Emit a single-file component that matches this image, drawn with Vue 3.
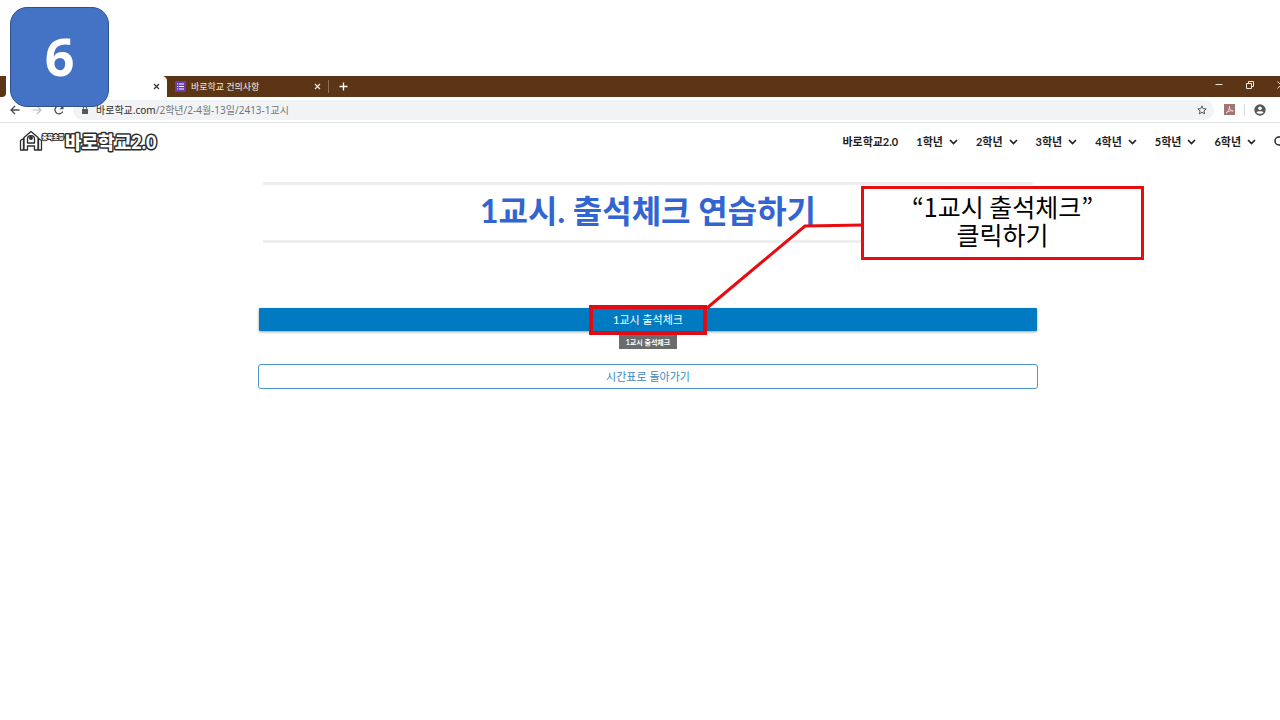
<script setup>
const grades = ['1학년', '2학년', '3학년', '4학년', '5학년', '6학년']
</script>

<template>
  <div class="slide">
    <div class="step">6</div>

    <div class="tabs">
      <div class="tab-prev"></div>
      <div class="tab active">
        <button class="icon-btn" aria-label="탭 닫기">
          <svg width="7" height="7" viewBox="0 0 7 7"><path d="M1 1l5 5M6 1l-5 5" stroke="#333" stroke-width="1.2" /></svg>
        </button>
      </div>
      <div class="tab">
        <svg width="11" height="11" viewBox="0 0 11 11">
          <rect width="11" height="11" rx="1" fill="#6a3ab2" />
          <path d="M2 3h1.2M2 5.500h1.200M2 8h1.200M4 3h5M4 5.500h5M4 8h5" stroke="#fff" stroke-width="1.2" />
        </svg>
        <span class="tab-title">바로학교 건의사항</span>
        <button class="icon-btn" aria-label="탭 닫기">
          <svg width="7" height="7" viewBox="0 0 7 7"><path d="M1 1l5 5M6 1l-5 5" stroke="#f3e6da" stroke-width="1.2" /></svg>
        </button>
      </div>
      <button class="icon-btn new-tab" aria-label="새 탭">
        <svg width="9" height="9" viewBox="0 0 9 9"><path d="M4.500 0.500v8M0.500 4.500h8" stroke="#fff" stroke-width="1.3" /></svg>
      </button>
      <div class="window-controls">
        <button class="icon-btn" aria-label="최소화">
          <svg width="8" height="8" viewBox="0 0 8 8"><path d="M0.500 3.500h7" stroke="#f3e6da" /></svg>
        </button>
        <button class="icon-btn" aria-label="이전 크기로 복원">
          <svg width="8" height="8" viewBox="0 0 8 8" fill="none" stroke="#f3e6da"><path d="M0.500 2.500h5v5h-5zM2.500 2.500v-2h5v5h-2" /></svg>
        </button>
        <button class="icon-btn" aria-label="닫기">
          <svg width="8" height="8" viewBox="0 0 8 8"><path d="M0.500 0.500l7 7M7.500 0.500l-7 7" stroke="#f3e6da" /></svg>
        </button>
      </div>
    </div>

    <div class="toolbar">
      <button class="icon-btn" aria-label="뒤로">
        <svg width="10" height="10" viewBox="0 0 10 10" fill="none" stroke="#4a4d51" stroke-width="1.300"><path d="M9.500 5H1M5 1L1 5l4 4" /></svg>
      </button>
      <button class="icon-btn" aria-label="앞으로">
        <svg width="10" height="10" viewBox="0 0 10 10" fill="none" stroke="#b9bbbe" stroke-width="1.200"><path d="M0.500 5H9M5 1l4 4-4 4" /></svg>
      </button>
      <button class="icon-btn" aria-label="새로고침">
        <svg width="10" height="10" viewBox="0 0 10 10" fill="none" stroke="#4a4d51" stroke-width="1.300"><path d="M8.600 6.500A4 4 0 1 1 8 2.300" /><path d="M9.500 0.300v4h-4z" fill="#4a4d51" stroke="none" /></svg>
      </button>
      <div class="address">
        <svg width="6" height="8" viewBox="0 0 6 8"><rect y="3" width="6" height="5" rx="0.600" fill="#54575b" /><path d="M1.300 3.500V2.200a1.700 1.700 0 0 1 3.400 0v1.300" fill="none" stroke="#54575b" /></svg>
        <span class="url"><span class="host">바로학교.com</span>/2학년/2-4월-13일/2413-1교시</span>
        <button class="icon-btn" aria-label="북마크">
          <svg width="10" height="10" viewBox="0 0 10 10" fill="none" stroke="#55585c"><path d="M5 0.900l1.200 2.800 3 .2-2.300 2 .8 3L5 7.300 2.300 8.900l.8-3-2.300-2 3-.2z" /></svg>
        </button>
      </div>
      <button class="icon-btn" aria-label="PDF">
        <svg width="11" height="11" viewBox="0 0 11 11"><rect width="11" height="11" fill="#a27575" /><path d="M2 9c2-1 3.500-4 3.500-6.800C5 5 7 7 9.200 7 6.500 6.200 4 7.200 2 9z" fill="none" stroke="#f3dddd" stroke-width="0.900" /></svg>
      </button>
      <span class="divider"></span>
      <button class="icon-btn" aria-label="프로필">
        <svg width="12" height="12" viewBox="0 0 12 12"><circle cx="6" cy="6" r="5.700" fill="#55585c" /><circle cx="6" cy="4.200" r="1.800" fill="#fff" /><path d="M2.500 8.300C3.300 6.900 8.700 6.900 9.500 8.300 8.200 10.300 3.800 10.300 2.500 8.300z" fill="#fff" /></svg>
      </button>
    </div>

    <header class="site-header">
      <a href="#" class="logo" aria-label="바로학교2.0">
        <svg width="142" height="24" viewBox="0 0 142 24">
          <g fill="#fff" stroke="#2c2c2c" stroke-width="1.300" stroke-linejoin="round">
            <path d="M1.500 10.500l3-2v11.500h-3zM22.500 10.500l-3-2v11.500h3z" />
            <path d="M5 7.500L12 1.500l7 6V20h-3.500v-4h-7v4H5z" />
            <path d="M8.500 13V9c0-4.500 7-4.500 7 0v4z" />
            <circle cx="12" cy="8" r="1.300" fill="#2c2c2c" />
          </g>
          <text x="23" y="9" class="logo-small">충북초등</text>
          <text x="46" y="19" class="logo-main">바로학교2.0</text>
        </svg>
      </a>
      <nav>
        <a href="#" class="home">바로학교2.0</a>
        <a v-for="g in grades" :key="g" href="#">
          {{ g }}
          <svg width="9" height="6" viewBox="0 0 9 6"><path d="M1 1l3.500 3.500L8 1" fill="none" stroke="#222" stroke-width="1.700" /></svg>
        </a>
        <button class="icon-btn search" aria-label="검색">
          <svg width="12" height="12" viewBox="0 0 12 12" fill="none" stroke="#222" stroke-width="1.500"><circle cx="5" cy="5" r="4" /><path d="M8 8l3.500 3.500" /></svg>
        </button>
      </nav>
    </header>

    <main>
      <h1>1교시. 출석체크 연습하기</h1>
      <div class="check">
        <a href="#" class="primary">1교시 출석체크</a>
        <span class="highlight"></span>
        <span class="tooltip">1교시 출석체크</span>
      </div>
      <a href="#" class="secondary">시간표로 돌아가기</a>

      <svg class="connector" width="160" height="90" viewBox="0 0 160 90"><path d="M3 85L101 3l59-1" fill="none" stroke="#e80c10" stroke-width="3" /></svg>
      <div class="callout">“1교시 출석체크”<br />클릭하기</div>
    </main>
  </div>
</template>

<style>
body {
  background: #fff;
}
</style>

<style scoped>
.slide {
  position: relative;
  padding-top: 76px;
  overflow: hidden;
  font-family: Lato, "Noto Sans CJK KR", sans-serif;
}
.slide * {
  box-sizing: border-box;
}
a {
  color: inherit;
  text-decoration: none;
}
svg {
  display: block;
  flex: none;
}
.icon-btn {
  display: flex;
  flex: none;
  padding: 0;
  border: 0;
  background: none;
}
.step {
  position: absolute;
  z-index: 2;
  top: 7px;
  left: 10px;
  display: flex;
  align-items: center;
  justify-content: center;
  width: 99px;
  height: 100px;
  padding-bottom: 2px;
  border: 1px solid #2f528f;
  border-radius: 17px;
  background: #4472c4;
  color: #fff;
  font: 700 52px/1 "Noto Sans", sans-serif;
}
.tabs {
  display: flex;
  height: 21px;
  background: linear-gradient(to right, #fff 12px, #5c3517 12px);
}
.tab-prev {
  width: 6px;
  background: #5c3517;
  border-radius: 0 0 4px 0;
}
.tab {
  display: flex;
  align-items: center;
  width: 162px;
  padding: 0 7px 0 8px;
  border-right: 1px solid #8f7058;
}
.tab.active {
  justify-content: flex-end;
  width: 161px;
  border: 0;
  background: #fff;
  border-radius: 5px 5px 0 0;
}
.tab:not(.active) {
  height: 13px;
  margin-top: 4px;
}
.tab-title {
  flex: 1;
  margin-left: 5px;
  color: #f7eee6;
  font: 400 9px/12px "Noto Sans CJK KR", sans-serif;
}
.new-tab {
  align-self: center;
  margin-left: 10px;
}
.window-controls {
  display: flex;
  gap: 23px;
  margin-left: auto;
  margin-right: -5px;
  padding-top: 5px;
}
.toolbar {
  display: flex;
  align-items: center;
  height: 26px;
  padding: 0 14px 0 10px;
  gap: 12px;
  border-bottom: 1px solid #dfe1e4;
}
.address {
  display: flex;
  flex: 1;
  align-items: center;
  height: 20px;
  margin-left: -3px;
  margin-right: -2px;
  padding: 0 7px 0 9px;
  border-radius: 10px;
  background: #f1f3f4;
}
.url {
  flex: 1;
  margin-left: 8px;
  color: #73777b;
  font: 400 10px/14px "Noto Sans", "Noto Sans CJK KR", sans-serif;
}
.host {
  color: #2b2d30;
}
.divider {
  width: 1px;
  height: 12px;
  margin: 0 -3px;
  background: #cfe0e4;
}
.site-header {
  display: flex;
  align-items: center;
  justify-content: space-between;
  height: 38px;
  padding-left: 19px;
}
.logo-small,
.logo-main {
  fill: #fff;
  stroke: #2c2c2c;
  paint-order: stroke;
  stroke-linejoin: round;
  font-weight: 900;
}
.logo-small {
  font-size: 6px;
  stroke-width: 2px;
}
.logo-main {
  font-size: 18px;
  stroke-width: 3px;
}
nav {
  display: flex;
  align-items: center;
  gap: 18px;
  margin-right: -6px;
  color: #222;
  font-size: 11px;
  font-weight: 700;
  line-height: 16px;
}
nav a {
  display: flex;
  align-items: center;
  gap: 6px;
}
main {
  position: relative;
  width: 780px;
  max-width: 100%;
  margin: 21px auto 0;
  left: 8px;
}
h1 {
  margin: 0 5px;
  padding: 0 0 4px;
  border-top: 3px solid #eee;
  border-bottom: 3px solid #eee;
  color: #3264d2;
  font-size: 32px;
  font-weight: 700;
  line-height: 51px;
  text-align: center;
}
.check {
  position: relative;
  margin: 65px 1px 0;
}
.primary,
.secondary {
  display: block;
  font-size: 11px;
  line-height: 23px;
  text-align: center;
}
.primary {
  border-radius: 1px;
  background: #007bc1;
  box-shadow: 0 1px 3px #0006;
  color: #fff;
}
.highlight {
  position: absolute;
  top: -3px;
  left: 50%;
  width: 118px;
  height: 30px;
  margin-left: -59px;
  border: 4px solid #e30b13;
}
.tooltip {
  position: absolute;
  top: 27px;
  left: 50%;
  width: 58px;
  margin-left: -29px;
  background: #6b6b6b;
  color: #fff;
  font-size: 7px;
  font-weight: 700;
  line-height: 14px;
  text-align: center;
}
.secondary {
  margin-top: 33px;
  border: 1px solid #4a9acb;
  border-radius: 3px;
  color: #3a87bd;
}
.connector {
  position: absolute;
  top: 41px;
  left: 446px;
}
.callout {
  position: absolute;
  top: 4px;
  left: 603px;
  width: 283px;
  padding: 3px 0 9px;
  border: 3px solid #e80c10;
  color: #000;
  font: 400 25px/28px "Noto Sans CJK KR", sans-serif;
  text-align: center;
  background: #fff;
}
</style>
